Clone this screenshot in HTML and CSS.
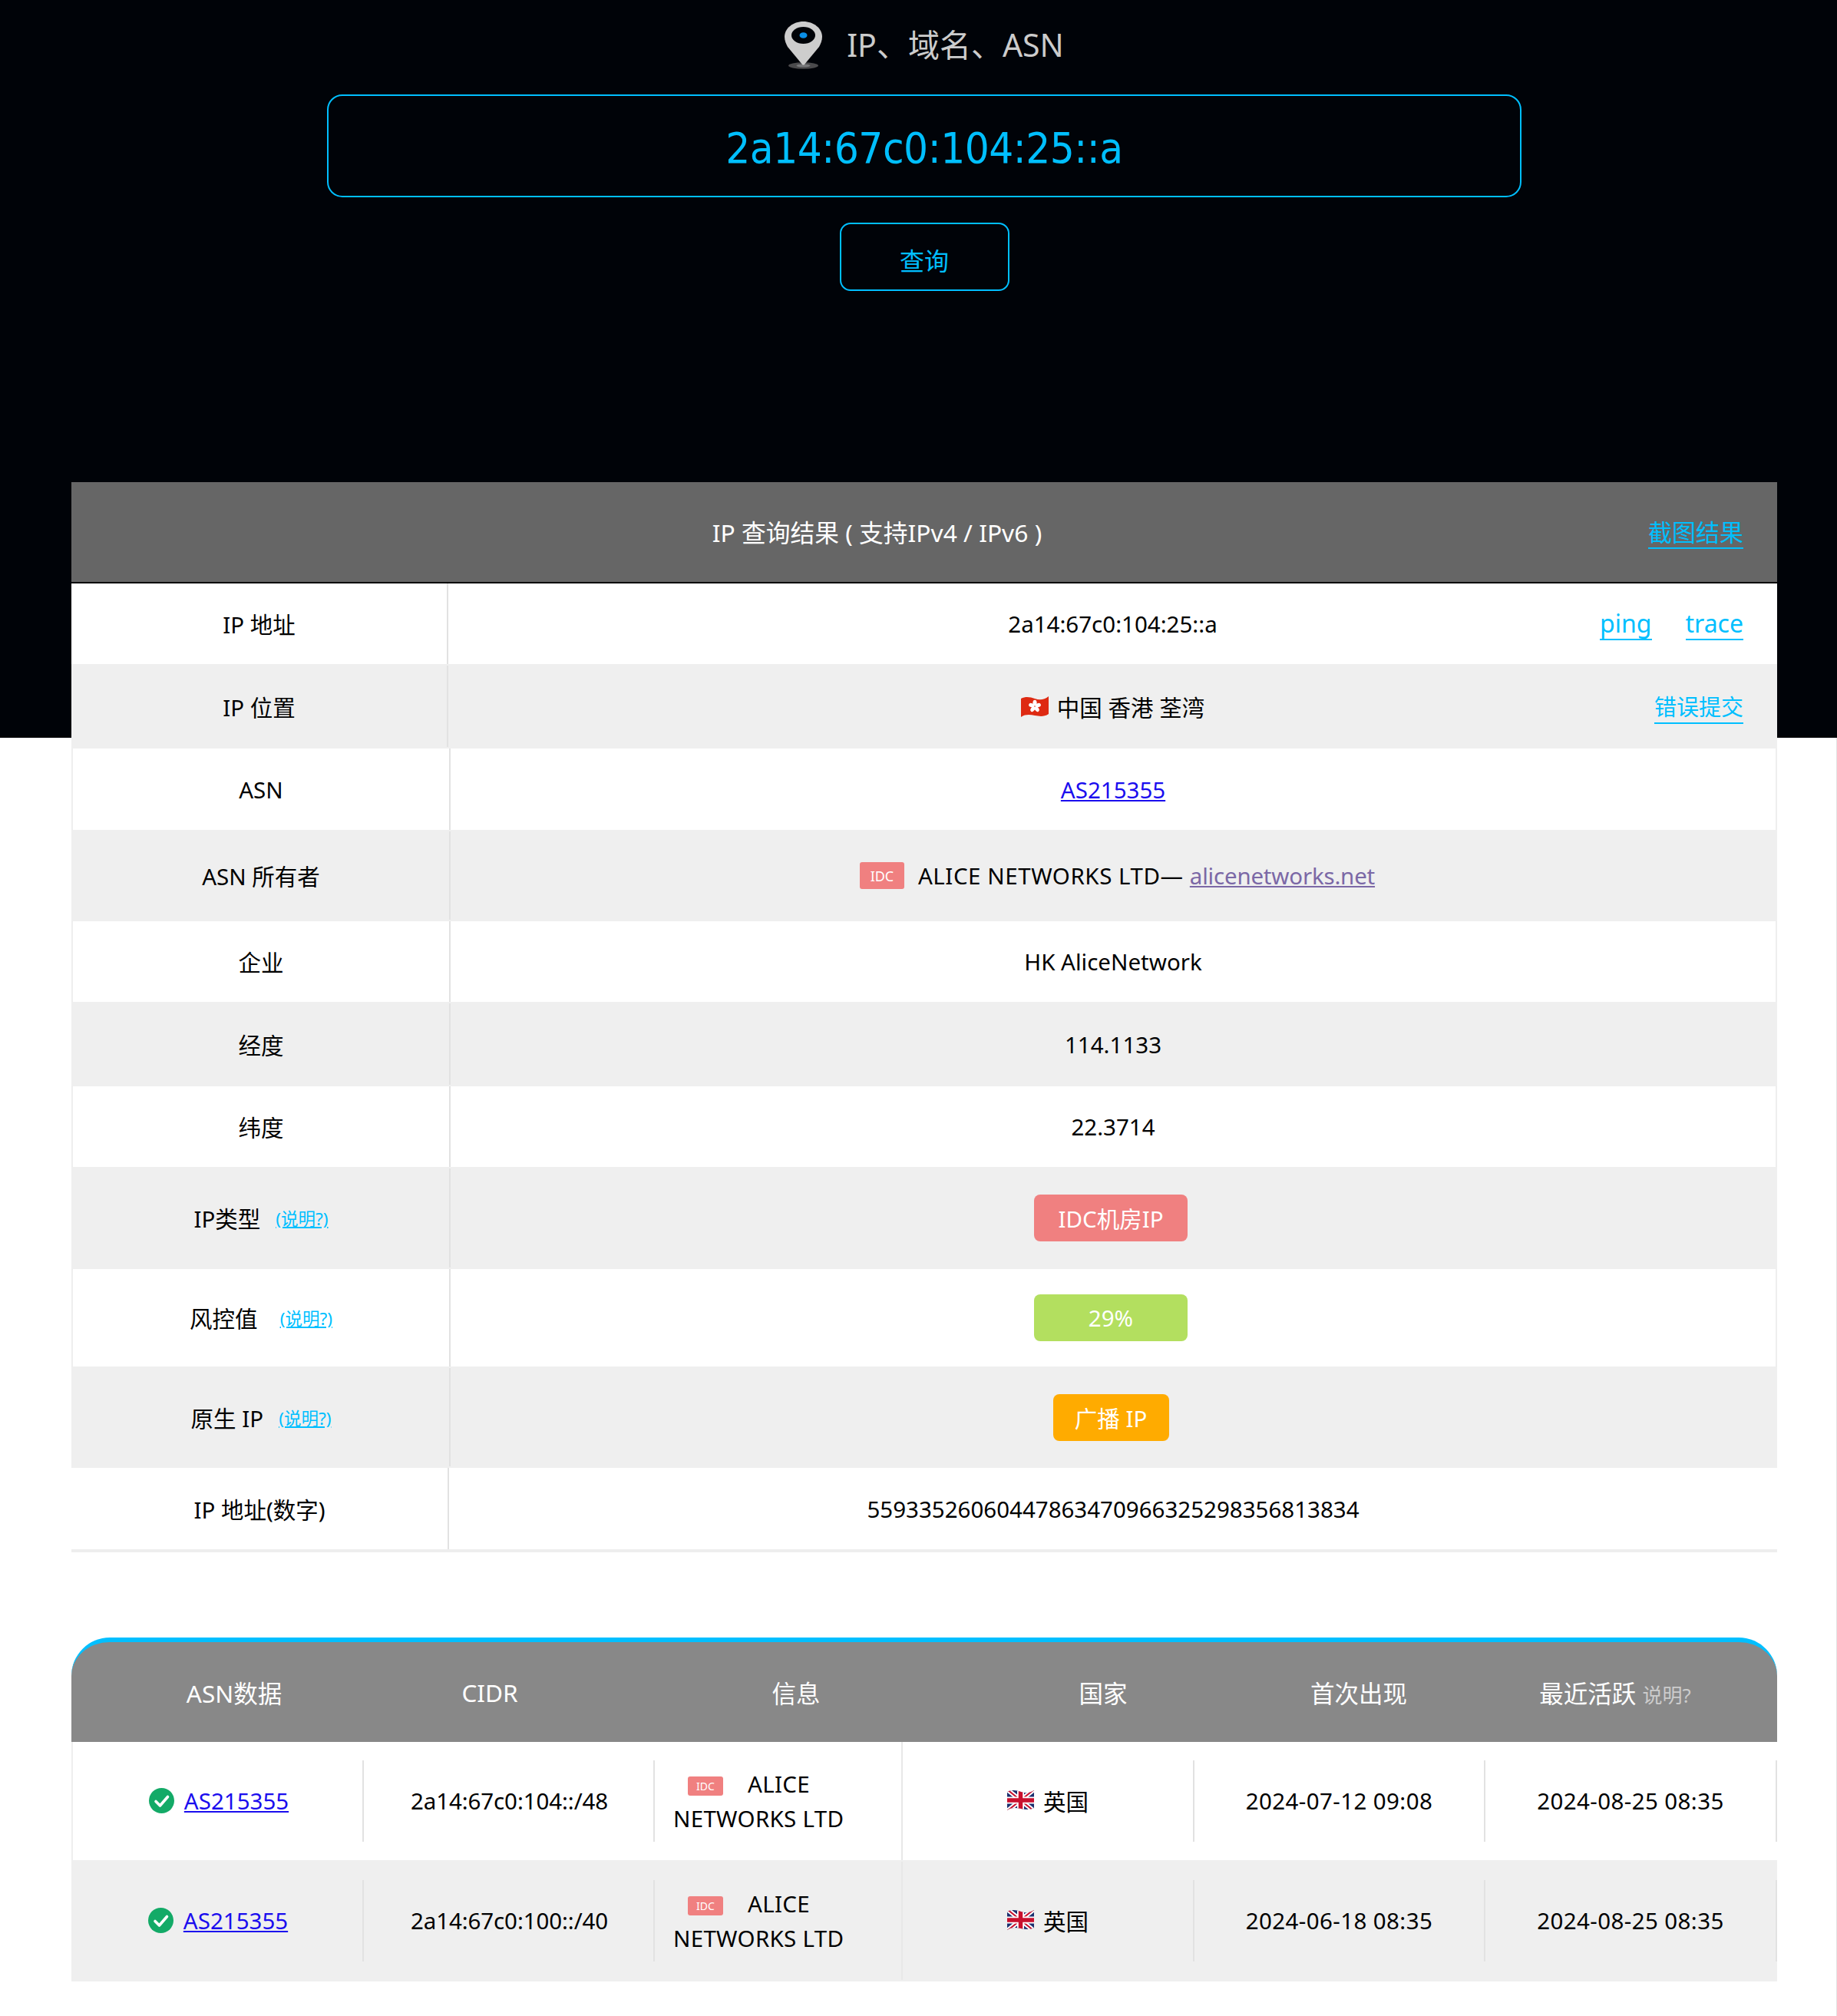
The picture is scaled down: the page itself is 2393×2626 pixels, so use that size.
FILE: index.html
```html
<!DOCTYPE html>
<html lang="zh-CN">
<head>
<meta charset="utf-8">
<title>IP 查询</title>
<link rel="stylesheet" href="styles.css">
</head>
<body>
<svg class="defs" width="0" height="0" aria-hidden="true">
  <defs>
    <clipPath id="uk-wave"><path d="M0 3C6 0 12 1 18 3S29 5 35 1V24C29 27 24 26 18 25S6 23 0 27Z"/></clipPath>
    <symbol id="flag-uk" viewBox="0 0 35 28">
      <g clip-path="url(#uk-wave)">
        <rect width="35" height="28" fill="#1c2f6e"/>
        <path d="M0 0L35 28M35 0L0 28" stroke="#fff" stroke-width="6"/>
        <path d="M0 0L35 28M35 0L0 28" stroke="#c8102e" stroke-width="2"/>
        <path d="M17.5 0V28M0 14H35" stroke="#fff" stroke-width="9"/>
        <path d="M17.5 0V28M0 14H35" stroke="#c8102e" stroke-width="5.5"/>
      </g>
    </symbol>
    <symbol id="check" viewBox="0 0 33 33">
      <circle cx="16.5" cy="16.5" r="16.5" fill="#13aa67"/>
      <path d="M9 17.5L14.5 23L24.5 11.5" fill="none" stroke="#fff" stroke-width="3.6" stroke-linecap="round" stroke-linejoin="round"/>
    </symbol>
  </defs>
</svg>
<div class="page">
  <header class="search">
    <div class="search-title">
      <svg class="pin" viewBox="0 0 49 62" width="49" height="62" aria-hidden="true">
        <ellipse cx="24.5" cy="57.5" rx="19.5" ry="4.2" fill="#4a4a4c"/>
        <ellipse cx="24.5" cy="57.5" rx="9" ry="2" fill="#77787a"/>
        <path d="M24.5 0C38 0 49 9 49 20C49 25 47 29 45 33L25.5 56.5H23.5L4 33C2 29 0 25 0 20C0 9 11 0 24.5 0Z" fill="#cdcdcd"/>
        <ellipse cx="24.5" cy="18" rx="15.5" ry="11" fill="#000308"/>
        <ellipse cx="24.5" cy="18" rx="5" ry="3.8" fill="#0a8fe6"/>
      </svg>
      <span class="search-label">IP、域名、ASN</span>
    </div>
    <div class="search-field">2a14:67c0:104:25::a</div>
    <button class="search-btn" type="button">查询</button>
  </header>

  <section class="result">
    <div class="result-head">
      <div class="result-title">IP 查询结果 ( 支持IPv4 / IPv6 )</div>
      <a class="tool-link head-link" href="#">截图结果</a>
    </div>
    <div class="kv">
      <div class="kv-row">
        <div class="kv-label top">IP 地址</div>
        <div class="kv-value split">
          <span></span><span>2a14:67c0:104:25::a</span>
          <span class="tools"><a class="tool-link large" href="#">ping</a><a class="tool-link large" href="#">trace</a></span>
        </div>
      </div>
      <div class="kv-row alt">
        <div class="kv-label top">IP 位置</div>
        <div class="kv-value split">
          <span></span>
          <span class="flagged">
            <svg class="flag-hk" viewBox="0 0 36 27" width="36" height="27" aria-hidden="true">
              <path d="M0 3C6 0 12 1 18 3S30 5 36 0V23C30 27 24 26 18 25S6 23 0 27Z" fill="#de2a12"/>
              <g fill="#fff" transform="translate(18 13)">
                <ellipse cx="0" cy="-4.4" rx="2.6" ry="3.8"/>
                <ellipse cx="0" cy="-4.4" rx="2.6" ry="3.8" transform="rotate(72)"/>
                <ellipse cx="0" cy="-4.4" rx="2.6" ry="3.8" transform="rotate(144)"/>
                <ellipse cx="0" cy="-4.4" rx="2.6" ry="3.8" transform="rotate(216)"/>
                <ellipse cx="0" cy="-4.4" rx="2.6" ry="3.8" transform="rotate(288)"/>
              </g>
            </svg>
            中国 香港 荃湾
          </span>
          <span class="tools"><a class="tool-link small" href="#">错误提交</a></span>
        </div>
      </div>
      <div class="kv-row edged">
        <div class="kv-label">ASN</div>
        <div class="kv-value"><a class="blue" href="#">AS215355</a></div>
      </div>
      <div class="kv-row edged alt">
        <div class="kv-label">ASN 所有者</div>
        <div class="kv-value owner"><span class="idc">IDC</span>ALICE NETWORKS LTD—&nbsp;<a class="visited" href="#">alicenetworks.net</a></div>
      </div>
      <div class="kv-row edged">
        <div class="kv-label">企业</div>
        <div class="kv-value">HK AliceNetwork</div>
      </div>
      <div class="kv-row edged alt">
        <div class="kv-label">经度</div>
        <div class="kv-value">114.1133</div>
      </div>
      <div class="kv-row edged">
        <div class="kv-label">纬度</div>
        <div class="kv-value">22.3714</div>
      </div>
      <div class="kv-row edged alt">
        <div class="kv-label">IP类型<a class="help" href="#">(说明?)</a></div>
        <div class="kv-value"><span class="pill pill-red">IDC机房IP</span></div>
      </div>
      <div class="kv-row edged">
        <div class="kv-label">风控值<a class="help help-wide" href="#">(说明?)</a></div>
        <div class="kv-value"><span class="pill pill-green">29%</span></div>
      </div>
      <div class="kv-row edged alt">
        <div class="kv-label">原生 IP<a class="help" href="#">(说明?)</a></div>
        <div class="kv-value"><span class="pill pill-orange">广播 IP</span></div>
      </div>
      <div class="kv-row last">
        <div class="kv-label">IP 地址(数字)</div>
        <div class="kv-value">55933526060447863470966325298356813834</div>
      </div>
    </div>
  </section>

  <section class="asn">
    <div class="asn-head">
      <div>ASN数据</div>
      <div>CIDR</div>
      <div>信息</div>
      <div>国家</div>
      <div>首次出现</div>
      <div>最近活跃 <span class="asn-help">说明?</span></div>
    </div>
    <div class="asn-row edged-row">
      <div class="cell as"><svg class="check" width="33" height="33" aria-hidden="true"><use href="#check"/></svg><a class="blue" href="#">AS215355</a></div>
      <div class="cell cidr">2a14:67c0:104::/48</div>
      <div class="cell info"><p><span class="idc idc-small">IDC</span><span>ALICE</span> <span>NETWORKS LTD</span></p></div>
      <div class="cell"><svg class="flag-uk" width="35" height="28" aria-hidden="true"><use href="#flag-uk"/></svg>英国</div>
      <div class="cell date">2024-07-12 09:08</div>
      <div class="cell date">2024-08-25 08:35</div>
    </div>
    <div class="asn-row alt tall">
      <div class="cell as"><svg class="check" width="33" height="33" aria-hidden="true"><use href="#check"/></svg><a class="blue" href="#">AS215355</a></div>
      <div class="cell cidr">2a14:67c0:100::/40</div>
      <div class="cell info"><p><span class="idc idc-small">IDC</span><span>ALICE</span> <span>NETWORKS LTD</span></p></div>
      <div class="cell"><svg class="flag-uk" width="35" height="28" aria-hidden="true"><use href="#flag-uk"/></svg>英国</div>
      <div class="cell date">2024-06-18 08:35</div>
      <div class="cell date">2024-08-25 08:35</div>
    </div>
  </section>
</div>
</body>
</html>
```

FILE: styles.css
```css
* { box-sizing: border-box; }

html, body { margin: 0; padding: 0; }

body {
  font-family: "Noto Sans", "Noto Sans CJK SC", sans-serif;
  font-size: 29.5px;
  color: #000;
  background:
    linear-gradient(#000308 961px, transparent 961px),
    linear-gradient(to left, #e2e2e2 1px, #fff 1px);
}

.defs { position: absolute; }

.page {
  min-height: 2626px;
  padding: 0 78px 45px 93px;
}

/* search hero */
.search {
  display: flex;
  flex-direction: column;
  align-items: center;
  height: 628px;
  padding-top: 28px;
}

.search-title {
  display: flex;
  align-items: center;
  gap: 32px;
  height: 62px;
  color: #ccc;
  font-size: 41px;
}

.search-label { margin-top: -6px; }

.search-field {
  width: 1556px;
  height: 134px;
  margin-top: 33px;
  border: 2px solid #00bfff;
  border-radius: 20px;
  color: #00bfff;
  font-family: "DejaVu Sans Condensed", "DejaVu Sans", sans-serif;
  font-size: 56px;
  letter-spacing: -0.5px;
  line-height: 136px;
  text-align: center;
}

.search-btn {
  width: 221px;
  height: 89px;
  margin-top: 33px;
  padding-top: 7px;
  background: transparent;
  border: 2px solid #00bfff;
  border-radius: 14px;
  color: #00bfff;
  font-family: inherit;
  font-size: 32px;
}

/* result table */
.result-head {
  display: flex;
  align-items: center;
  height: 132px;
  padding: 0 44px 0 45px;
  background: #666;
  border-bottom: 2px solid #000;
  color: #fff;
  font-size: 31.75px;
}

.result-title { flex: 1; margin-top: -2px; text-align: center; }

.tool-link {
  color: #00bfff;
  font-size: 31px;
  line-height: 40px;
  text-decoration: none;
  border-bottom: 2px solid #00bfff;
}

.tool-link.head-link { margin-top: 2px; }
.tool-link.large { font-size: 32px; }
.tool-link.small { margin-top: 3px; font-size: 29px; }

.kv {
  display: grid;
  grid-template-rows: 105px 110px 106px 119px 105px 110px 105px 133px 127px 132px 110px;
}

.kv-row { display: flex; background: #fff; }
.kv-row.alt { background: #efefef; }

.kv-row.edged {
  border-left: 2px solid #eee;
  border-right: 2px solid #eee;
}

.kv-row.alt.edged { border-color: #efefef; }
.kv-row.last { border-bottom: 4px solid #eee; }

.kv-label {
  flex: 0 0 492px;
  display: flex;
  align-items: center;
  justify-content: center;
  border-right: 2px solid #e2e2e2;
}

.kv-label.top { flex-basis: 491px; }
.alt .kv-label { margin: 2px 0; }

.kv-value {
  flex: 1;
  display: flex;
  align-items: center;
  justify-content: center;
  min-width: 0;
}

.kv-value.split {
  display: grid;
  grid-template-columns: minmax(0, 1fr) auto minmax(0, 1fr);
  padding: 0 44px;
}

.kv-value.owner {
  padding-left: 11px;
  letter-spacing: 0.55px;
}

.tools {
  display: flex;
  justify-content: flex-end;
  gap: 44px;
}

.flagged { display: flex; align-items: center; }
.flag-hk { margin-right: 11px; }

.blue { color: #1a0dee; }
.visited { color: #7b68a6; letter-spacing: -0.2px; }

.help {
  margin-left: 20px;
  color: #00bfff;
  font-size: 22.5px;
}

.help-wide { margin-left: 29px; }

.idc {
  display: inline-flex;
  align-items: center;
  justify-content: center;
  width: 58px;
  height: 35px;
  margin-right: 18px;
  background: #f08080;
  border-radius: 3px;
  color: #fff;
  font-size: 18px;
  letter-spacing: 0;
}

.pill {
  display: flex;
  align-items: center;
  justify-content: center;
  height: 61px;
  margin-right: 6px;
  border-radius: 8px;
  color: #fff;
}

.pill-red { width: 200px; background: #f08080; }
.pill-green { width: 200px; background: #b3df5f; }
.pill-orange { width: 151px; background: #ffab00; }

/* ASN table */
.asn { margin-top: 111px; }

.asn-head {
  display: grid;
  grid-template-columns: 424px 242px 556px 244px 422px 246px;
  align-items: center;
  height: 136px;
  background: #888;
  border-top: 6px solid #00bfff;
  border-radius: 50px 50px 0 0;
  color: #fff;
  font-size: 31.5px;
  text-align: center;
}

.asn-help { color: #ccc; font-size: 26px; }

.asn-row {
  display: grid;
  grid-template-columns: 381px 379px 323px 380px 379px 380px;
  height: 154px;
  background: #fff;
}

.asn-row.alt { background: #efefef; }
.asn-row.tall { height: 158px; }
.asn-row.edged-row { border-left: 2px solid #eee; grid-template-columns: 379px 379px 323px 380px 379px 380px; }

.cell {
  display: flex;
  align-items: center;
  justify-content: center;
  align-self: center;
  height: 106px;
  padding-bottom: 2px;
  border-right: 2px solid #e2e2e2;
}

.cell.as { padding-left: 3px; }
.cell.cidr { padding-left: 2px; letter-spacing: -0.1px; }
.cell.date { letter-spacing: 0.4px; }

.cell.info {
  align-self: stretch;
  height: auto;
  justify-content: flex-start;
  padding: 0 0 0 24px;
  border-right-color: #e8e8e8;
  letter-spacing: 0.3px;
}

.alt .cell.info { margin: 2px 0; }

.info p { margin: 0; line-height: 45px; }

.idc-small {
  width: 46px;
  height: 25px;
  margin: 0 32px 0 19px;
  font-size: 14px;
  vertical-align: 3px;
}

.check { margin-right: 13px; }
.flag-uk { margin-right: 12px; }
```
